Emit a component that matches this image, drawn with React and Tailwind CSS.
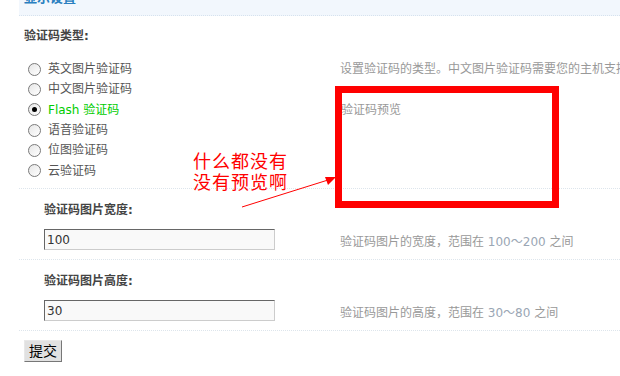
import React from 'react';

const font = { fontFamily: '"DejaVu Sans", "Noto Sans CJK SC", sans-serif' };

const options = [
    { label: '英文图片验证码' },
    { label: '中文图片验证码' },
    { label: 'Flash 验证码', checked: true },
    { label: '语音验证码' },
    { label: '位图验证码' },
    { label: '云验证码' },
];

function Radio({ checked }) {
    return (
        <span className="w-[13px] h-[13px] rounded-full border border-[#7a7a7a] bg-gradient-to-br from-[#e6e6e6] to-white flex items-center justify-center shrink-0">
            {checked && <span className="w-[5px] h-[5px] rounded-full bg-black" />}
        </span>
    );
}

function SizeRow({ label, value, tip, range }) {
    return (
        <div>
            <div className="h-[39px] flex items-center pl-[25px] pt-[2px] font-bold text-[#444]">{label}</div>
            <div className="flex h-[32px] border-b border-dotted border-[#dde5ec]">
                <div className="w-[321px] shrink-0 pl-[25px] pt-[1px]">
                    <input
                        readOnly
                        value={value}
                        className="w-[231px] h-[21px] bg-[#f9f9f9] border border-t-[#666] border-l-[#666] border-b-[#ccc] border-r-[#ccc] px-[2px] text-[12px] text-[#333] outline-none"
                        style={font}
                    />
                </div>
                <div className="pt-[4px] text-[#999] whitespace-nowrap">
                    {tip}<span className="text-[#9aa6b4]"> {range} </span>之间
                </div>
            </div>
        </div>
    );
}

export default function App() {
    return (
        <div className="relative w-[620px] h-[376px] overflow-hidden bg-white text-[12px] leading-[20px]" style={font}>
            <div className="pl-[19px]">
                <div className="h-[16px] bg-[#f2f7fd] border-b border-dotted border-[#d6e2ee] overflow-hidden pl-[5px]">
                    <div className="-mt-[12px] font-bold text-[#2a7fc0] text-[13px]">显示设置</div>
                </div>

                <div className="h-[40px] flex items-center pl-[5px] font-bold text-[#444]">验证码类型:</div>

                <div className="flex h-[133px] border-b border-dotted border-[#dde5ec]">
                    <div className="w-[321px] shrink-0 pl-[9px] pt-[3px]">
                        {options.map((o) => (
                            <div key={o.label} className="flex items-center h-[20.3px] gap-[7px]">
                                <Radio checked={o.checked} />
                                <span className={o.checked ? 'text-[#00cc00]' : 'text-[#555]'}>{o.label}</span>
                            </div>
                        ))}
                    </div>
                    <div className="pt-[3px] text-[#999] whitespace-nowrap">
                        <div>设置验证码的类型。中文图片验证码需要您的主机支持 GD 库与 FreeType 库</div>
                        <div className="mt-[21px] pl-[1px]">验证码预览</div>
                    </div>
                </div>

                <SizeRow label="验证码图片宽度:" value="100" tip="验证码图片的宽度，范围在" range="100～200" />
                <SizeRow label="验证码图片高度:" value="30" tip="验证码图片的高度，范围在" range="30～80" />

                <div className="pl-[5px] pt-[9px]">
                    <button className="h-[22px] px-[4px] bg-[#e1e1e1] border border-t-[#e8e8e8] border-l-[#e8e8e8] border-b-[#777] border-r-[#777] text-[14px] text-black leading-none" style={font}>
                        提交
                    </button>
                </div>
            </div>

            {/* annotation overlay */}
            <div className="absolute left-[335px] top-[86px] w-[224px] h-[122px] border-[7px] border-[#ff0000]" />
            <div className="absolute left-[193px] top-[150px] text-[#ff0000] text-[18px] leading-[21px] tracking-[1px]" style={{ fontFamily: '"Noto Sans CJK SC", sans-serif' }}>
                <div>什么都没有</div>
                <div>没有预览啊</div>
            </div>
            <svg className="absolute left-0 top-0" width="620" height="376">
                <line x1="242" y1="207" x2="328" y2="180" stroke="#ff0000" strokeWidth="1" />
                <polygon points="336,177 325,177 328,185" fill="#ff0000" />
            </svg>
        </div>
    );
}
